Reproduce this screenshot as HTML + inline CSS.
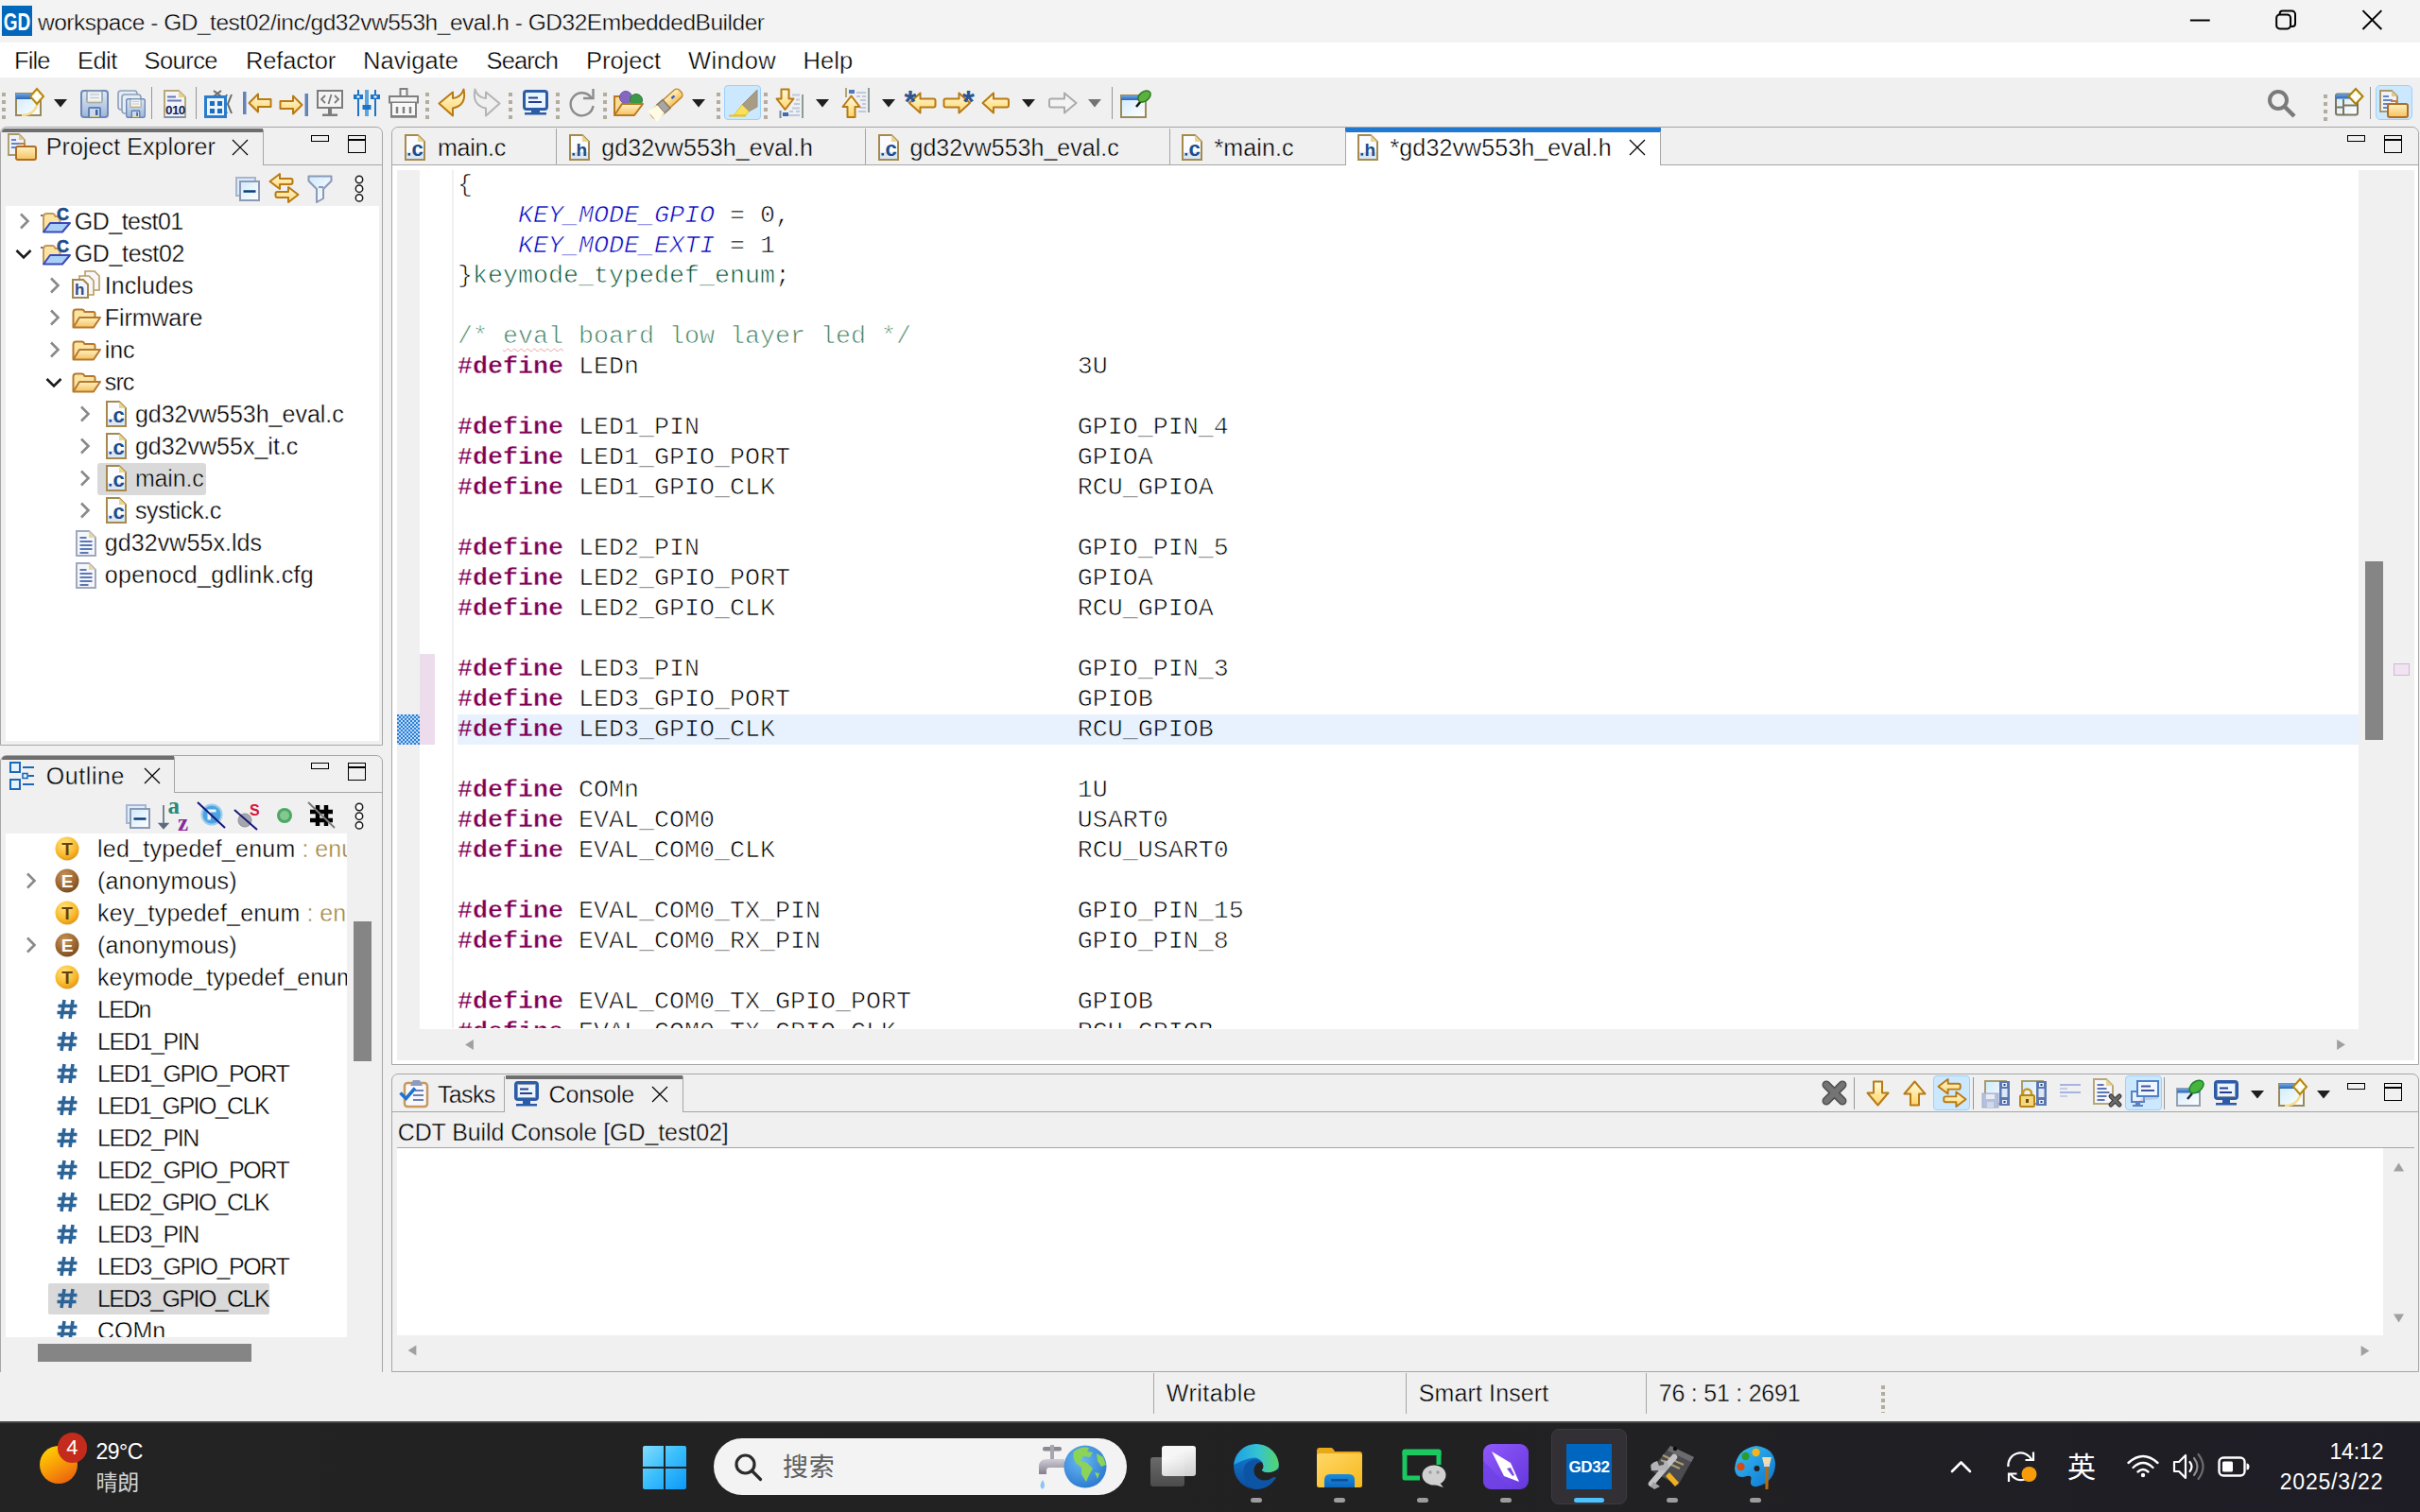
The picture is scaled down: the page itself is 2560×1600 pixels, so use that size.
<!DOCTYPE html>
<html lang="zh"><head><meta charset="utf-8"><title>workspace - GD_test02/inc/gd32vw553h_eval.h - GD32EmbeddedBuilder</title>
<style>
*{box-sizing:border-box;margin:0;padding:0}
html,body{width:2560px;height:1600px;overflow:hidden;background:#f0f0f0}
body{position:relative;font-family:"Liberation Sans","Noto Sans CJK SC",sans-serif;font-size:25px;color:#000;-webkit-font-smoothing:antialiased}
.a{position:absolute}
.t{position:absolute;white-space:pre;line-height:34px;height:34px}
.ln{position:absolute;left:484px;white-space:pre;font-family:"Liberation Mono",monospace;font-size:26.667px;line-height:32px;height:32px;color:#000;-webkit-text-stroke:.7px #fff}
.hl{-webkit-text-stroke-color:#e8f2fe}
.kw{color:#7f0055;font-weight:bold;-webkit-text-stroke-width:.4px}
.cm{color:#3f7f5f}
.en{color:#0000c0;font-style:italic}
.ty{color:#005032}
.sq{text-decoration:underline wavy #f0a0a0 1px;text-underline-offset:5px}
.bd{position:absolute;background:#a0a0a0}
svg{position:absolute;overflow:visible}
</style></head>
<body>
<div class="a" style="left:0px;top:0px;width:2560px;height:45px;background:#f3f3f3;"></div>
<div class="a" style="left:0px;top:45px;width:2560px;height:37px;background:#ffffff;"></div>
<div class="a" style="left:0px;top:82px;width:2560px;height:1422px;background:#f0f0f0;"></div>
<div class="a" style="left:2px;top:6px;width:32px;height:32px;background:#0067bb;"></div>
<div class="a" style="left:-4px;top:6px;width:44px;height:32px;color:#fff;font-weight:bold;font-size:25px;line-height:34px;text-align:center;letter-spacing:0;transform:scaleX(.76)">GD</div>
<div class="t" style="left:40px;top:6.8px;font-size:24.5px;color:#000;letter-spacing:-0.476px;-webkit-text-stroke:.4px #f3f3f3;">workspace - GD_test02/inc/gd32vw553h_eval.h - GD32EmbeddedBuilder</div>
<svg style="left:2301.500px;top:0" width="258" height="45" viewBox="0 0 260 45" fill="none" stroke="#000" stroke-width="2"><path d="M15 21.5h21"/><rect x="107" y="15.5" width="15" height="15" rx="3.5"/><path d="M110.5 15.5v-1a3 3 0 0 1 3-3h10a3.500 3.500 0 0 1 3.500 3.500v10a3 3 0 0 1-3 3h-1.500"/><path d="M199 11l20 20M219 11l-20 20"/></svg>
<div class="t" style="left:15px;top:46.5px;font-size:25.5px;color:#000;letter-spacing:-0.898px;-webkit-text-stroke:.4px #fff;">File</div>
<div class="t" style="left:82px;top:46.5px;font-size:25.5px;color:#000;letter-spacing:-0.551px;-webkit-text-stroke:.4px #fff;">Edit</div>
<div class="t" style="left:152.5px;top:46.5px;font-size:25.5px;color:#000;letter-spacing:-0.549px;-webkit-text-stroke:.4px #fff;">Source</div>
<div class="t" style="left:260px;top:46.5px;font-size:25.5px;color:#000;letter-spacing:-0.172px;-webkit-text-stroke:.4px #fff;">Refactor</div>
<div class="t" style="left:384px;top:46.5px;font-size:25.5px;color:#000;letter-spacing:0.043px;-webkit-text-stroke:.4px #fff;">Navigate</div>
<div class="t" style="left:514.5px;top:46.5px;font-size:25.5px;color:#000;letter-spacing:-0.883px;-webkit-text-stroke:.4px #fff;">Search</div>
<div class="t" style="left:620px;top:46.5px;font-size:25.5px;color:#000;letter-spacing:-0.054px;-webkit-text-stroke:.4px #fff;">Project</div>
<div class="t" style="left:728px;top:46.5px;font-size:25.5px;color:#000;letter-spacing:0.383px;-webkit-text-stroke:.4px #fff;">Window</div>
<div class="t" style="left:849.5px;top:46.5px;font-size:25.5px;color:#000;letter-spacing:0.112px;-webkit-text-stroke:.4px #fff;">Help</div>
<svg width="0" height="0" style="left:0;top:0"><defs>
<linearGradient id="gy" x1="0" y1="0" x2="0" y2="1"><stop offset="0" stop-color="#fffbe0"/><stop offset="1" stop-color="#ffd466"/></linearGradient>
<linearGradient id="gb" x1="0" y1="0" x2="0" y2="1"><stop offset="0" stop-color="#dfe9f6"/><stop offset="1" stop-color="#9fb6d8"/></linearGradient>
<linearGradient id="gw" x1="0" y1="0" x2="1" y2="1"><stop offset="0" stop-color="#cfeafb"/><stop offset="1" stop-color="#ffffff"/></linearGradient>
<linearGradient id="gf" x1="0" y1="0" x2="0" y2="1"><stop offset="0" stop-color="#fff2c4"/><stop offset="1" stop-color="#f5c160"/></linearGradient>
<linearGradient id="gt" x1="0" y1="0" x2="0" y2="1"><stop offset="0" stop-color="#6aa6e6"/><stop offset="1" stop-color="#2c64b4"/></linearGradient>
<radialGradient id="gT" cx=".4" cy=".3" r=".8"><stop offset="0" stop-color="#ffe680"/><stop offset=".6" stop-color="#f9b92c"/><stop offset="1" stop-color="#d98a10"/></radialGradient>
<radialGradient id="gE" cx=".4" cy=".3" r=".8"><stop offset="0" stop-color="#c9935a"/><stop offset=".6" stop-color="#9a6630"/><stop offset="1" stop-color="#6e4318"/></radialGradient>
</defs></svg>
<svg style="left:2px;top:98px" width="4" height="32" viewBox="0 0 4 32" ><rect x="0" y="0" width="4" height="4" fill="#b4ac9e"/><rect x="0" y="8" width="4" height="4" fill="#b4ac9e"/><rect x="0" y="16" width="4" height="4" fill="#b4ac9e"/><rect x="0" y="24" width="4" height="4" fill="#b4ac9e"/></svg>
<svg style="left:15px;top:93px" width="34" height="32" viewBox="0 0 34 32" ><rect x="2" y="6" width="26" height="23" fill="url(#gw)" stroke="#9a8a5a" stroke-width="2"/><rect x="2" y="6" width="20" height="6" fill="url(#gt)"/><path d="M8 29q14 0 17-14" stroke="#f7dc8c" stroke-width="2.500" fill="none"/><path d="M24 1l7 8-7 8-7-8z" fill="#fff6d8" stroke="#b8860b" stroke-width="2"/><path d="M24 4.500v9M19.500 9h9" stroke="#fff" stroke-width="2.500"/></svg>
<svg style="left:57px;top:105px" width="14" height="8.5" viewBox="0 0 14 8.5" ><path d="M0 0h14L7 8.500z" fill="#1f1f1f"/></svg>
<svg style="left:85px;top:95px" width="30" height="30" viewBox="0 0 30 30" ><g transform="scale(1)"><rect x="1" y="1" width="28" height="28" rx="3" fill="url(#gb)" stroke="#6c88b8" stroke-width="2"/><rect x="7" y="1.500" width="16" height="12" rx="1.500" fill="#f2f5f8" stroke="#8ea0a8" stroke-width="1.500"/><path d="M10 5h10M10 8.500h10" stroke="#c4ccd4" stroke-width="1.500"/><path d="M7.500 12.500h15" stroke="#f0d890" stroke-width="1.500"/><rect x="9" y="19" width="12" height="10" rx="1" fill="#cdd9ec" stroke="#5c80b8" stroke-width="2"/><rect x="16" y="21" width="2.500" height="6" fill="#3c64a8"/><path d="M10 28h10" stroke="#f0d890" stroke-width="1.500"/></g></svg>
<svg style="left:124px;top:95px" width="30" height="30" viewBox="0 0 30 30" ><rect x="1" y="1" width="20" height="20" rx="3" fill="#e4ecf6" stroke="#8ea0b8" stroke-width="1.600"/><rect x="5" y="5" width="20" height="20" rx="3" fill="#e4ecf6" stroke="#8ea0b8" stroke-width="1.600"/><g transform="translate(9,9)"><g transform="scale(0.7)"><rect x="1" y="1" width="28" height="28" rx="3" fill="url(#gb)" stroke="#6c88b8" stroke-width="2"/><rect x="7" y="1.500" width="16" height="12" rx="1.500" fill="#f2f5f8" stroke="#8ea0a8" stroke-width="1.500"/><path d="M10 5h10M10 8.500h10" stroke="#c4ccd4" stroke-width="1.500"/><path d="M7.500 12.500h15" stroke="#f0d890" stroke-width="1.500"/><rect x="9" y="19" width="12" height="10" rx="1" fill="#cdd9ec" stroke="#5c80b8" stroke-width="2"/><rect x="16" y="21" width="2.500" height="6" fill="#3c64a8"/><path d="M10 28h10" stroke="#f0d890" stroke-width="1.500"/></g></g></svg>
<div class="a" style="left:160px;top:92px;width:1.3px;height:34px;background:#969696;"></div>
<svg style="left:172px;top:94px" width="28" height="32" viewBox="0 0 28 32" ><path d="M2 2h15l7 7v21H2z" fill="#f2f4fc" stroke="#b8a878" stroke-width="2"/><path d="M17 2v7h7z" fill="#e8d08c"/><path d="M5 8.500h9M5 12.500h15" stroke="#6878b0" stroke-width="2"/><path d="M2 30h22" stroke="#8090b0" stroke-width="2"/><text x="3" y="27" font-family="Liberation Sans,sans-serif" font-weight="bold" font-size="13.500" fill="#10245c" letter-spacing="-.6">010</text></svg>
<div class="a" style="left:207px;top:92px;width:1.3px;height:34px;background:#969696;"></div>
<svg style="left:216px;top:94px" width="31" height="31" viewBox="0 0 31 31" ><path d="M10 2l8 6M18 2l-8 6M24 6l-4 10 4 10M29 6l-4 10 4 10" stroke="#6a6a6a" stroke-width="2" fill="none"/><rect x="1.500" y="8.500" width="21" height="21" fill="#eaf4fc" stroke="#2c7ccc" stroke-width="3"/><path d="M6 13h5v5H6zM14 13h5v5h-5zM6 21h5v5H6zM14 21h5v5h-5z" fill="#1c6cc0"/></svg>
<svg style="left:257px;top:97px" width="31" height="24" viewBox="0 0 31 24" ><rect x="0" y="0" width="3.500" height="24" fill="#6482b8"/><path d="M6.500 12L16 2.500v5.500h13.500v8H16v5.500z" fill="url(#gy)" stroke="#b87a14" stroke-width="2" stroke-linejoin="round"/></svg>
<svg style="left:295px;top:99px" width="31" height="24" viewBox="0 0 31 24" ><rect x="27.500" y="0" width="3.500" height="24" fill="#6482b8"/><path d="M24.500 12L15 2.500v5.500H1.500v8H15v5.500z" fill="url(#gy)" stroke="#b87a14" stroke-width="2" stroke-linejoin="round"/></svg>
<svg style="left:335px;top:95px" width="28" height="28" viewBox="0 0 28 28" ><rect x="1" y="1" width="26" height="18" fill="#f4f4f4" stroke="#7c7c7c" stroke-width="2"/><path d="M9 6l-4 4 4 4M19 6l4 4-4 4M15.500 5l-3 10" stroke="#7c7c7c" stroke-width="1.800" fill="none"/><rect x="12" y="20" width="4" height="6" fill="#7c7c7c"/><rect x="6" y="25.500" width="16" height="2.500" fill="#7c7c7c"/></svg>
<svg style="left:374px;top:95px" width="28" height="28" viewBox="0 0 28 28" ><path d="M5 0v28M23 0v28" stroke="#1c74c8" stroke-width="2"/><path d="M14 0v28" stroke="#5ca4dc" stroke-width="4"/><rect x="0" y="5" width="10" height="5" fill="#1c74c8"/><rect x="18" y="5" width="10" height="5" fill="#1c74c8"/><rect x="9.500" y="16" width="9" height="5" fill="#1c74c8"/><rect x="3.500" y="6.500" width="3" height="2" fill="#fff"/><rect x="21.500" y="6.500" width="3" height="2" fill="#fff"/></svg>
<svg style="left:411px;top:93px" width="32" height="32" viewBox="0 0 32 32" ><rect x="12.500" y="1" width="7" height="8" fill="#f4f4f4" stroke="#808080" stroke-width="2"/><rect x="1" y="9" width="30" height="6.500" fill="#f4f4f4" stroke="#808080" stroke-width="2"/><path d="M3 16v14h26V16" fill="#f8f8f8" stroke="#808080" stroke-width="2"/><path d="M9 20v7M16 20v7M23 20v7" stroke="#808080" stroke-width="2.500"/><path d="M2 30.500h28" stroke="#808080" stroke-width="2.500"/></svg>
<svg style="left:450px;top:98px" width="4" height="32" viewBox="0 0 4 32" ><rect x="0" y="0" width="4" height="4" fill="#b4ac9e"/><rect x="0" y="8" width="4" height="4" fill="#b4ac9e"/><rect x="0" y="16" width="4" height="4" fill="#b4ac9e"/><rect x="0" y="24" width="4" height="4" fill="#b4ac9e"/></svg>
<svg style="left:463px;top:93px" width="31" height="31" viewBox="0 0 31 31" ><path d="M1.500 16.500L16 4.500v6.500q9-1 11.500-9.500 3.500 17-11.500 20v8z" fill="url(#gy)" stroke="#b87a14" stroke-width="2" stroke-linejoin="round"/></svg>
<svg style="left:499px;top:93px" width="31" height="31" viewBox="0 0 31 31" ><path d="M29.500 16.500L15 4.500v6.500q-9-1-11.500-9.500-3.500 17 11.500 20v8z" fill="#f0f0f0" stroke="#b4b4b4" stroke-width="2" stroke-linejoin="round"/></svg>
<svg style="left:538px;top:98px" width="4" height="32" viewBox="0 0 4 32" ><rect x="0" y="0" width="4" height="4" fill="#b4ac9e"/><rect x="0" y="8" width="4" height="4" fill="#b4ac9e"/><rect x="0" y="16" width="4" height="4" fill="#b4ac9e"/><rect x="0" y="24" width="4" height="4" fill="#b4ac9e"/></svg>
<svg style="left:553px;top:95px" width="27" height="27" viewBox="0 0 27 27" ><rect x="1.500" y="1.500" width="24" height="19" rx="2.500" fill="#eaf6fe" stroke="#2c5ca8" stroke-width="3"/><path d="M6 8.500h10M6 13h14" stroke="#283c8c" stroke-width="2"/><rect x="9" y="21" width="9" height="3" fill="#2c5ca8"/><rect x="2" y="24" width="23" height="2.500" fill="#2c5ca8"/></svg>
<svg style="left:588px;top:98px" width="4" height="32" viewBox="0 0 4 32" ><rect x="0" y="0" width="4" height="4" fill="#b4ac9e"/><rect x="0" y="8" width="4" height="4" fill="#b4ac9e"/><rect x="0" y="16" width="4" height="4" fill="#b4ac9e"/><rect x="0" y="24" width="4" height="4" fill="#b4ac9e"/></svg>
<svg style="left:601px;top:94px" width="30" height="30" viewBox="0 0 30 30" ><path d="M24.500 9.500A12 12 0 1 0 26.500 18" fill="none" stroke="#8c8c8c" stroke-width="2.400"/><path d="M16 10h10.500V0" fill="none" stroke="#8c8c8c" stroke-width="2.400"/></svg>
<svg style="left:638px;top:98px" width="4" height="32" viewBox="0 0 4 32" ><rect x="0" y="0" width="4" height="4" fill="#b4ac9e"/><rect x="0" y="8" width="4" height="4" fill="#b4ac9e"/><rect x="0" y="16" width="4" height="4" fill="#b4ac9e"/><rect x="0" y="24" width="4" height="4" fill="#b4ac9e"/></svg>
<svg style="left:648px;top:94px" width="34" height="30" viewBox="0 0 34 30" ><path d="M2 28V8h9l3 3h14v6" fill="#f8dc94" stroke="#b87a1e" stroke-width="2"/><circle cx="14" cy="9" r="6.500" fill="#8468c0" stroke="#6a50a8" stroke-width="1"/><circle cx="25" cy="12" r="6.500" fill="#3c9848" stroke="#2a7c36" stroke-width="1"/><path d="M2 28l8-12h22l-9 12z" fill="url(#gf)" stroke="#b87a1e" stroke-width="2" stroke-linejoin="round"/></svg>
<svg style="left:688px;top:93px" width="34" height="33" viewBox="0 0 34 33" ><g transform="rotate(-42 17 17)"><rect x="-3" y="11.500" width="40" height="11" rx="4" fill="url(#gf)" stroke="#c08a30" stroke-width="1.500"/><rect x="9" y="11" width="8" height="12" fill="#a8a4a8" stroke="#8a7a50" stroke-width="1.500"/><path d="M9 11.500L-3 9.500v15l12-2z" fill="#fffbe4"/><rect x="25" y="15" width="4" height="2.500" fill="#3c5cc0"/></g></svg>
<svg style="left:732px;top:105px" width="14" height="8.5" viewBox="0 0 14 8.5" ><path d="M0 0h14L7 8.500z" fill="#1f1f1f"/></svg>
<svg style="left:758px;top:98px" width="4" height="32" viewBox="0 0 4 32" ><rect x="0" y="0" width="4" height="4" fill="#b4ac9e"/><rect x="0" y="8" width="4" height="4" fill="#b4ac9e"/><rect x="0" y="16" width="4" height="4" fill="#b4ac9e"/><rect x="0" y="24" width="4" height="4" fill="#b4ac9e"/></svg>
<div class="a" style="left:766px;top:90px;width:39px;height:37px;background:#cce8ff;border:1.500px solid #99d1ff;border-radius:4px"></div>
<svg style="left:770px;top:93px" width="32" height="32" viewBox="0 0 32 32" ><path d="M31 2v18l-9 5-7-7z" fill="#a89c84" stroke="#98907c" stroke-width="1"/><path d="M15 18l7 7-3 4H6q4-5 9-11z" fill="#f8e060" stroke="#e8c828" stroke-width="1"/><path d="M1 29.500h18" stroke="#e8c020" stroke-width="2"/></svg>
<svg style="left:808px;top:98px" width="4" height="32" viewBox="0 0 4 32" ><rect x="0" y="0" width="4" height="4" fill="#b4ac9e"/><rect x="0" y="8" width="4" height="4" fill="#b4ac9e"/><rect x="0" y="16" width="4" height="4" fill="#b4ac9e"/><rect x="0" y="24" width="4" height="4" fill="#b4ac9e"/></svg>
<svg style="left:821px;top:93px" width="30" height="32" viewBox="0 0 30 32" ><path d="M28 7v25" stroke="#8c9c98" stroke-width="2"/><path d="M17 7.500h8M21 12.500h4M19 17h6M17 21.500h8M14 25h4M21 25h4M12 29h13" stroke="#c0c8e0" stroke-width="2"/><path d="M4.500 24v8" stroke="#7088a8" stroke-width="2"/><rect x="7" y="26" width="6" height="4" fill="#3c6cb0"/><path d="M5.500 1.500h8v10h5l-9 11.500-9-11.500h5z" fill="url(#gy)" stroke="#b87a14" stroke-width="2" stroke-linejoin="round"/></svg>
<svg style="left:863px;top:105px" width="14" height="8.5" viewBox="0 0 14 8.5" ><path d="M0 0h14L7 8.500z" fill="#1f1f1f"/></svg>
<svg style="left:891px;top:93px" width="30" height="32" viewBox="0 0 30 32" ><path d="M4 0v10" stroke="#b0a878" stroke-width="2"/><path d="M28 0v26" stroke="#8c9c98" stroke-width="2"/><rect x="7" y="2" width="6" height="4" fill="#5478b8"/><path d="M15 5h10M15 9h4M21 9h4M19 13h6M21 17h4M19 21h6M17 25h8" stroke="#c0c8e0" stroke-width="2"/><path d="M5.500 31h8V20h5l-9-11.500-9 11.500h5z" fill="url(#gy)" stroke="#b87a14" stroke-width="2" stroke-linejoin="round"/></svg>
<svg style="left:933px;top:105px" width="14" height="8.5" viewBox="0 0 14 8.5" ><path d="M0 0h14L7 8.500z" fill="#1f1f1f"/></svg>
<svg style="left:958px;top:97px" width="33" height="24" viewBox="0 0 33 24" ><path d="M4 12L15.5 1.500v6h14q2 0 2 2v5q0 2-2 2h-14v6z" fill="url(#gy)" stroke="#b87a14" stroke-width="2" stroke-linejoin="round"/><text x="-1.500" y="22" font-family="Liberation Sans,sans-serif" font-weight="bold" font-size="33" fill="#2c5490">*</text></svg>
<svg style="left:997px;top:97px" width="33" height="24" viewBox="0 0 33 24" ><g transform="translate(33,0) scale(-1,1)"><path d="M4 12L15.5 1.500v6h14q2 0 2 2v5q0 2-2 2h-14v6z" fill="url(#gy)" stroke="#b87a14" stroke-width="2" stroke-linejoin="round"/></g><text x="21" y="22" font-family="Liberation Sans,sans-serif" font-weight="bold" font-size="33" fill="#2c5490">*</text></svg>
<svg style="left:1038px;top:97px" width="31" height="24" viewBox="0 0 31 24" ><path d="M1.5 12L13 1.500v6h14q2 0 2 2v5q0 2-2 2h-14v6z" fill="url(#gy)" stroke="#b87a14" stroke-width="2" stroke-linejoin="round"/></svg>
<svg style="left:1081px;top:105px" width="14" height="8.5" viewBox="0 0 14 8.5" ><path d="M0 0h14L7 8.500z" fill="#1f1f1f"/></svg>
<svg style="left:1109px;top:97px" width="31" height="24" viewBox="0 0 31 24" ><path d="M29.500 12L17 1.500v6H3q-2 0-2 2v5q0 2 2 2h14v6z" fill="#f4f4f4" stroke="#ababab" stroke-width="2" stroke-linejoin="round"/></svg>
<svg style="left:1151px;top:105px" width="14" height="8.5" viewBox="0 0 14 8.5" ><path d="M0 0h14L7 8.500z" fill="#737373"/></svg>
<div class="a" style="left:1176px;top:92px;width:1.3px;height:34px;background:#969696;"></div>
<svg style="left:1185px;top:95px" width="34" height="31" viewBox="0 0 34 31" ><rect x="1" y="6" width="26" height="23" fill="url(#gw)" stroke="#9a8a5a" stroke-width="2"/><rect x="1" y="6" width="26" height="5" fill="url(#gt)"/><path d="M22 12l-5 6" stroke="#111" stroke-width="2.500"/><ellipse cx="24" cy="9.500" rx="4.500" ry="3.500" transform="rotate(-38 24 9.500)" fill="#2c9434"/><ellipse cx="25.500" cy="7" rx="7.500" ry="5" transform="rotate(-38 25.500 7)" fill="#5cb040" stroke="#2a7a22" stroke-width="1.500"/></svg>
<svg style="left:2397px;top:93px" width="33" height="33" viewBox="0 0 33 33" ><circle cx="13" cy="13" r="9" fill="none" stroke="#7a7a7a" stroke-width="4"/><path d="M20 20l10 10" stroke="#7a7a7a" stroke-width="4.500"/></svg>
<svg style="left:2458px;top:100px" width="4" height="32" viewBox="0 0 4 32" ><rect x="0" y="0" width="4" height="4" fill="#b4ac9e"/><rect x="0" y="8" width="4" height="4" fill="#b4ac9e"/><rect x="0" y="16" width="4" height="4" fill="#b4ac9e"/><rect x="0" y="24" width="4" height="4" fill="#b4ac9e"/></svg>
<svg style="left:2470px;top:93px" width="32" height="32" viewBox="0 0 32 32" ><rect x="1" y="6.500" width="23" height="22" rx="2" fill="url(#gw)" stroke="#7c745c" stroke-width="2"/><path d="M1 8.500q0-2 2-2h19v5H1z" fill="url(#gt)"/><path d="M9 12v17M1 20.500h8M9 18.500h15" stroke="#7c745c" stroke-width="2"/><path d="M22 1l7.500 8-7.500 8-7.500-8z" fill="#fff6d8" stroke="#a8800b" stroke-width="2"/><path d="M22 4.500v9M17.500 9h9" stroke="#fff" stroke-width="2.500"/></svg>
<div class="a" style="left:2507px;top:92px;width:1.3px;height:34px;background:#969696;"></div>
<div class="a" style="left:2513px;top:90px;width:39px;height:37px;background:#cce8ff;border:1.500px solid #99d1ff;border-radius:5px"></div>
<svg style="left:2516px;top:94px" width="32" height="32" viewBox="0 0 32 32" ><path d="M2 2h12l6 6v16H2z" fill="#f0f2fa" stroke="#a89868" stroke-width="2"/><path d="M14 2v6h6z" fill="#e0c888"/><path d="M5 8h6M5 12h10M5 16h10M5 20h6" stroke="#6484c4" stroke-width="2"/><path d="M13 13h6v3" fill="#fff" stroke="#c08040" stroke-width="2"/><rect x="10" y="16" width="21" height="14" rx="2" fill="url(#gf)" stroke="#b06c20" stroke-width="2"/></svg>
<div class="a" style="left:0px;top:134px;width:405px;height:655px;border:1px solid #a6a6a6;border-radius:7px 7px 0 0;background:#f0f0f0"></div>
<div class="a" style="left:2px;top:136px;width:276px;height:4px;background:#6e6e6e;border-radius:4px 0 0 0"></div>
<div class="a" style="left:278px;top:137px;width:1px;height:37px;background:#a6a6a6;"></div>
<div class="a" style="left:278px;top:173.5px;width:126px;height:1px;background:#a6a6a6;"></div>
<div class="t" style="left:48.75px;top:138px;font-size:25px;color:#000;letter-spacing:0.087px;-webkit-text-stroke:.4px #f0f0f0;">Project Explorer</div>
<svg style="left:245px;top:147px" width="18" height="18" viewBox="0 0 18 18" stroke="#000" stroke-width="1.2" fill="none"><path d="M1 1L17 17M17 1L1 17"/></svg>
<div class="a" style="left:329px;top:143px;width:19px;height:7px;border:1.500px solid #000"></div><div class="a" style="left:368px;top:143px;width:19px;height:19px;border:1.500px solid #000;border-top-width:1.500px"></div><div class="a" style="left:368px;top:147px;width:19px;height:1.500px;background:#000"></div>
<div class="a" style="left:6px;top:217.5px;width:394.5px;height:566.5px;background:#ffffff;"></div>
<div class="a" style="left:103px;top:490px;width:115px;height:33.5px;background:#d9d9d9;border-radius:3px"></div>
<svg style="left:20px;top:225px" width="12" height="18" viewBox="0 0 12 18" fill="none" stroke="#8a8a8a" stroke-width="2.6"><path d="M2 1.500L9.500 9L2 16.500"/></svg>
<div class="t" style="left:78.75px;top:217px;font-size:25px;color:#000;letter-spacing:-0.502px;-webkit-text-stroke:.4px #f0f0f0;">GD_test01</div>
<svg style="left:16px;top:263px" width="18" height="12" viewBox="0 0 18 12" fill="none" stroke="#1a1a1a" stroke-width="2.6"><path d="M1.500 2L9 9.500L16.500 2"/></svg>
<div class="t" style="left:78.75px;top:251px;font-size:25px;color:#000;letter-spacing:-0.363px;-webkit-text-stroke:.4px #f0f0f0;">GD_test02</div>
<svg style="left:52px;top:293px" width="12" height="18" viewBox="0 0 12 18" fill="none" stroke="#8a8a8a" stroke-width="2.6"><path d="M2 1.500L9.500 9L2 16.500"/></svg>
<div class="t" style="left:110.75px;top:285px;font-size:25px;color:#000;letter-spacing:0.078px;-webkit-text-stroke:.4px #f0f0f0;">Includes</div>
<svg style="left:52px;top:327px" width="12" height="18" viewBox="0 0 12 18" fill="none" stroke="#8a8a8a" stroke-width="2.6"><path d="M2 1.500L9.500 9L2 16.500"/></svg>
<div class="t" style="left:110.75px;top:319px;font-size:25px;color:#000;letter-spacing:-0.084px;-webkit-text-stroke:.4px #f0f0f0;">Firmware</div>
<svg style="left:52px;top:361px" width="12" height="18" viewBox="0 0 12 18" fill="none" stroke="#8a8a8a" stroke-width="2.6"><path d="M2 1.500L9.500 9L2 16.500"/></svg>
<div class="t" style="left:110.75px;top:353px;font-size:25px;color:#000;letter-spacing:-0.073px;-webkit-text-stroke:.4px #f0f0f0;">inc</div>
<svg style="left:48px;top:399px" width="18" height="12" viewBox="0 0 18 12" fill="none" stroke="#1a1a1a" stroke-width="2.6"><path d="M1.500 2L9 9.500L16.500 2"/></svg>
<div class="t" style="left:110.75px;top:387px;font-size:25px;color:#000;letter-spacing:-0.859px;-webkit-text-stroke:.4px #f0f0f0;">src</div>
<svg style="left:84px;top:429px" width="12" height="18" viewBox="0 0 12 18" fill="none" stroke="#8a8a8a" stroke-width="2.6"><path d="M2 1.500L9.500 9L2 16.500"/></svg>
<div class="t" style="left:142.9px;top:421px;font-size:25px;color:#000;letter-spacing:-0.006px;-webkit-text-stroke:.4px #f0f0f0;">gd32vw553h_eval.c</div>
<svg style="left:84px;top:463px" width="12" height="18" viewBox="0 0 12 18" fill="none" stroke="#8a8a8a" stroke-width="2.6"><path d="M2 1.500L9.500 9L2 16.500"/></svg>
<div class="t" style="left:142.9px;top:455px;font-size:25px;color:#000;letter-spacing:0.005px;-webkit-text-stroke:.4px #f0f0f0;">gd32vw55x_it.c</div>
<svg style="left:84px;top:497px" width="12" height="18" viewBox="0 0 12 18" fill="none" stroke="#8a8a8a" stroke-width="2.6"><path d="M2 1.500L9.500 9L2 16.500"/></svg>
<div class="t" style="left:142.9px;top:489px;font-size:25px;color:#000;letter-spacing:-0.157px;-webkit-text-stroke:.4px #f0f0f0;">main.c</div>
<svg style="left:84px;top:531px" width="12" height="18" viewBox="0 0 12 18" fill="none" stroke="#8a8a8a" stroke-width="2.6"><path d="M2 1.500L9.500 9L2 16.500"/></svg>
<div class="t" style="left:142.9px;top:523px;font-size:25px;color:#000;letter-spacing:-0.373px;-webkit-text-stroke:.4px #f0f0f0;">systick.c</div>
<div class="t" style="left:110.75px;top:557px;font-size:25px;color:#000;letter-spacing:0.081px;-webkit-text-stroke:.4px #f0f0f0;">gd32vw55x.lds</div>
<div class="t" style="left:110.75px;top:591px;font-size:25px;color:#000;letter-spacing:0.322px;-webkit-text-stroke:.4px #f0f0f0;">openocd_gdlink.cfg</div>
<svg style="left:249px;top:187px" width="27" height="26" viewBox="0 0 27 26" ><rect x="1" y="1" width="20" height="19" fill="#d8ecfa" stroke="#a8b4d0" stroke-width="2"/><rect x="5" y="5" width="20" height="20" fill="url(#gw)" stroke="#8c98b4" stroke-width="2"/><path d="M8.500 15.500h13" stroke="#0c3c78" stroke-width="2.500"/></svg>
<svg style="left:284px;top:183px" width="33" height="33" viewBox="0 0 33 33" ><g transform="scale(1)"><path d="M1.500 9L12 1v5h11.500q2 0 2 2v2q0 2-2 2H12v5z" fill="url(#gy)" stroke="#b87a14" stroke-width="2" stroke-linejoin="round"/><path d="M31.500 23L21 15v5H9.500q-2 0-2 2v2q0 2 2 2H21v5z" fill="url(#gy)" stroke="#b87a14" stroke-width="2" stroke-linejoin="round"/></g></svg>
<svg style="left:325px;top:185px" width="27" height="30" viewBox="0 0 27 30" ><path d="M1.500 1.500h24v5L17 15v10l-7 4V15L1.500 6.500z" fill="url(#gw)" stroke="#8c98b8" stroke-width="2" stroke-linejoin="round"/><path d="M12 13h5" stroke="#8c98b8" stroke-width="2"/></svg>
<svg style="left:374.5px;top:185px" width="10" height="30" viewBox="0 0 10 30" ><circle cx="5" cy="5" r="3.700" fill="#fff" stroke="#1a1a1a" stroke-width="1.500"/><circle cx="5" cy="14.700" r="3.700" fill="#fff" stroke="#1a1a1a" stroke-width="1.500"/><circle cx="5" cy="24.400" r="3.700" fill="#fff" stroke="#1a1a1a" stroke-width="1.500"/></svg>
<svg style="left:42px;top:220px" width="33" height="27" viewBox="0 0 33 27" ><path d="M1 8h4" stroke="#7c6c8c" stroke-width="2"/><path d="M4 25V9.500q0-3.500 3.500-3.500h6q2 0 3 3h5v7" fill="#fae4a4" stroke="#c49a58" stroke-width="2"/><path d="M4 25.500L11 16h21l-8 9.500z" fill="#a8d0f8" stroke="#3c48b8" stroke-width="2" stroke-linejoin="round"/><text x="18" y="13" font-family="Liberation Sans,sans-serif" font-weight="bold" font-size="18" fill="#1c4c88" stroke="#1c4c88" stroke-width=".6">C</text></svg>
<svg style="left:42px;top:254px" width="33" height="27" viewBox="0 0 33 27" ><path d="M1 8h4" stroke="#7c6c8c" stroke-width="2"/><path d="M4 25V9.500q0-3.500 3.500-3.500h6q2 0 3 3h5v7" fill="#fae4a4" stroke="#c49a58" stroke-width="2"/><path d="M4 25.500L11 16h21l-8 9.500z" fill="#a8d0f8" stroke="#3c48b8" stroke-width="2" stroke-linejoin="round"/><text x="18" y="13" font-family="Liberation Sans,sans-serif" font-weight="bold" font-size="18" fill="#1c4c88" stroke="#1c4c88" stroke-width=".6">C</text></svg>
<svg style="left:76px;top:286px" width="31" height="30" viewBox="0 0 31 30" ><path d="M14 1h10l5 5v15h-15z" fill="#f6f6fc" stroke="#b89c5c" stroke-width="1.600"/><path d="M8 6h10l5 5v15h-15z" fill="#f6f6fc" stroke="#b89c5c" stroke-width="1.600"/><path d="M1 10h11l5 5v14H1z" fill="#f4f6fe" stroke="#a68a4c" stroke-width="2"/><text x="3" y="26" font-family="Liberation Sans,sans-serif" font-weight="bold" font-size="17" fill="#2c4c88">h</text></svg>
<svg style="left:75.5px;top:326px" width="31" height="22" viewBox="0 0 31 22" ><path d="M1.500 20V4.500q0-3 3-3h6q2 0 3 2.500h9q2 0 2 2v4" fill="#fae4a4" stroke="#b8782a" stroke-width="2"/><path d="M1.500 20.500L8 10h22l-7 10.500z" fill="url(#gf)" stroke="#b8782a" stroke-width="2" stroke-linejoin="round"/></svg>
<svg style="left:75.5px;top:360px" width="31" height="22" viewBox="0 0 31 22" ><path d="M1.500 20V4.500q0-3 3-3h6q2 0 3 2.500h9q2 0 2 2v4" fill="#fae4a4" stroke="#b8782a" stroke-width="2"/><path d="M1.500 20.500L8 10h22l-7 10.500z" fill="url(#gf)" stroke="#b8782a" stroke-width="2" stroke-linejoin="round"/></svg>
<svg style="left:75.5px;top:394px" width="31" height="22" viewBox="0 0 31 22" ><path d="M1.500 20V4.500q0-3 3-3h6q2 0 3 2.500h9q2 0 2 2v4" fill="#fae4a4" stroke="#b8782a" stroke-width="2"/><path d="M1.500 20.500L8 10h22l-7 10.500z" fill="url(#gf)" stroke="#b8782a" stroke-width="2" stroke-linejoin="round"/></svg>
<svg style="left:112px;top:424px" width="23" height="28" viewBox="0 0 23 28" ><path d="M1 1h13l7 7v19H1z" fill="#fbfcff" stroke="#a68a4c" stroke-width="2"/><path d="M14 1v7h7z" fill="#ecd490"/><rect x="2" y="19" width="18" height="7" fill="#dbe6f6"/><rect x="3.500" y="20" width="2.600" height="2.600" fill="#1c4c88"/><text x="7.5" y="22.800" font-family="Liberation Sans,sans-serif" font-weight="bold" font-size="22" fill="#1c4c88">c</text></svg>
<svg style="left:112px;top:458px" width="23" height="28" viewBox="0 0 23 28" ><path d="M1 1h13l7 7v19H1z" fill="#fbfcff" stroke="#a68a4c" stroke-width="2"/><path d="M14 1v7h7z" fill="#ecd490"/><rect x="2" y="19" width="18" height="7" fill="#dbe6f6"/><rect x="3.500" y="20" width="2.600" height="2.600" fill="#1c4c88"/><text x="7.5" y="22.800" font-family="Liberation Sans,sans-serif" font-weight="bold" font-size="22" fill="#1c4c88">c</text></svg>
<svg style="left:112px;top:492px" width="23" height="28" viewBox="0 0 23 28" ><path d="M1 1h13l7 7v19H1z" fill="#fbfcff" stroke="#a68a4c" stroke-width="2"/><path d="M14 1v7h7z" fill="#ecd490"/><rect x="2" y="19" width="18" height="7" fill="#dbe6f6"/><rect x="3.500" y="20" width="2.600" height="2.600" fill="#1c4c88"/><text x="7.5" y="22.800" font-family="Liberation Sans,sans-serif" font-weight="bold" font-size="22" fill="#1c4c88">c</text></svg>
<svg style="left:112px;top:526px" width="23" height="28" viewBox="0 0 23 28" ><path d="M1 1h13l7 7v19H1z" fill="#fbfcff" stroke="#a68a4c" stroke-width="2"/><path d="M14 1v7h7z" fill="#ecd490"/><rect x="2" y="19" width="18" height="7" fill="#dbe6f6"/><rect x="3.500" y="20" width="2.600" height="2.600" fill="#1c4c88"/><text x="7.5" y="22.800" font-family="Liberation Sans,sans-serif" font-weight="bold" font-size="22" fill="#1c4c88">c</text></svg>
<svg style="left:80px;top:561px" width="23" height="28" viewBox="0 0 23 28" ><path d="M1 1h13l7 7v19H1z" fill="#f4f6fc" stroke="#a0a8bc" stroke-width="2"/><path d="M14 1v7h7z" fill="#e8d8a0"/><path d="M4.500 8h7M4.500 12h13M4.500 16h13M4.500 20h13M4.500 24h9" stroke="#5c78b4" stroke-width="2"/></svg>
<svg style="left:80px;top:595px" width="23" height="28" viewBox="0 0 23 28" ><path d="M1 1h13l7 7v19H1z" fill="#f4f6fc" stroke="#a0a8bc" stroke-width="2"/><path d="M14 1v7h7z" fill="#e8d8a0"/><path d="M4.500 8h7M4.500 12h13M4.500 16h13M4.500 20h13M4.500 24h9" stroke="#5c78b4" stroke-width="2"/></svg>
<div class="a" style="left:0px;top:798.5px;width:405px;height:700px;border:1px solid #a6a6a6;border-radius:7px 7px 0 0;background:#f0f0f0"></div>
<div class="a" style="left:0px;top:1452px;width:420px;height:52px;background:#f0f0f0;"></div>
<div class="a" style="left:2px;top:800px;width:182px;height:4px;background:#6e6e6e;border-radius:4px 0 0 0"></div>
<div class="a" style="left:184px;top:801px;width:1px;height:37px;background:#a6a6a6;"></div>
<div class="a" style="left:184px;top:838px;width:220px;height:1px;background:#a6a6a6;"></div>
<div class="t" style="left:48.75px;top:803.5px;font-size:25px;color:#000;letter-spacing:0.576px;-webkit-text-stroke:.4px #f0f0f0;">Outline</div>
<svg style="left:152px;top:812px" width="18" height="18" viewBox="0 0 18 18" stroke="#000" stroke-width="1.2" fill="none"><path d="M1 1L17 17M17 1L1 17"/></svg>
<div class="a" style="left:329px;top:807px;width:19px;height:7px;border:1.500px solid #000"></div><div class="a" style="left:368px;top:807px;width:19px;height:19px;border:1.500px solid #000;border-top-width:1.500px"></div><div class="a" style="left:368px;top:811px;width:19px;height:1.500px;background:#000"></div>
<div class="a" style="left:6px;top:882px;width:361px;height:532.5px;background:#ffffff;"></div>
<div class="a" style="left:374px;top:975px;width:19px;height:147.5px;background:#858585;"></div>
<div class="a" style="left:40px;top:1422px;width:226px;height:19px;background:#858585;"></div>
<div class="a" style="left:51px;top:1358px;width:234px;height:33px;background:#d9d9d9;border-radius:2px"></div>
<div class="a" style="left:0;top:0;width:367px;height:1414.5px;overflow:hidden">
<div class="t" style="left:103px;top:880.7px;font-size:25px;color:#000;letter-spacing:0.236px;-webkit-text-stroke:.4px #fff;">led_typedef_enum</div>
<div class="t" style="left:312.5px;top:880.7px;font-size:25px;color:#a0823c;-webkit-text-stroke:.4px #fff;"> : enu</div>
<svg style="left:26.5px;top:923.2px" width="12" height="18" viewBox="0 0 12 18" fill="none" stroke="#8a8a8a" stroke-width="2.6"><path d="M2 1.500L9.500 9L2 16.500"/></svg>
<div class="t" style="left:103px;top:914.7px;font-size:25px;color:#000;letter-spacing:0.168px;-webkit-text-stroke:.4px #fff;">(anonymous)</div>
<div class="t" style="left:103px;top:948.7px;font-size:25px;color:#000;letter-spacing:0.202px;-webkit-text-stroke:.4px #fff;">key_typedef_enum</div>
<div class="t" style="left:317.5px;top:948.7px;font-size:25px;color:#a0823c;-webkit-text-stroke:.4px #fff;"> : en</div>
<svg style="left:26.5px;top:991.2px" width="12" height="18" viewBox="0 0 12 18" fill="none" stroke="#8a8a8a" stroke-width="2.6"><path d="M2 1.500L9.500 9L2 16.500"/></svg>
<div class="t" style="left:103px;top:982.7px;font-size:25px;color:#000;letter-spacing:0.168px;-webkit-text-stroke:.4px #fff;">(anonymous)</div>
<div class="t" style="left:103px;top:1016.7px;font-size:25px;color:#000;-webkit-text-stroke:.4px #fff;">keymode_typedef_enum</div>
<div class="t" style="left:103px;top:1050.7px;font-size:25px;color:#000;letter-spacing:-1.699px;-webkit-text-stroke:.4px #fff;">LEDn</div>
<div class="t" style="left:103px;top:1084.7px;font-size:25px;color:#000;letter-spacing:-1.391px;-webkit-text-stroke:.4px #fff;">LED1_PIN</div>
<div class="t" style="left:103px;top:1118.7px;font-size:25px;color:#000;letter-spacing:-1.390px;-webkit-text-stroke:.4px #fff;">LED1_GPIO_PORT</div>
<div class="t" style="left:103px;top:1152.7px;font-size:25px;color:#000;letter-spacing:-1.577px;-webkit-text-stroke:.4px #fff;">LED1_GPIO_CLK</div>
<div class="t" style="left:103px;top:1186.7px;font-size:25px;color:#000;letter-spacing:-1.391px;-webkit-text-stroke:.4px #fff;">LED2_PIN</div>
<div class="t" style="left:103px;top:1220.7px;font-size:25px;color:#000;letter-spacing:-1.390px;-webkit-text-stroke:.4px #fff;">LED2_GPIO_PORT</div>
<div class="t" style="left:103px;top:1254.7px;font-size:25px;color:#000;letter-spacing:-1.577px;-webkit-text-stroke:.4px #fff;">LED2_GPIO_CLK</div>
<div class="t" style="left:103px;top:1288.7px;font-size:25px;color:#000;letter-spacing:-1.391px;-webkit-text-stroke:.4px #fff;">LED3_PIN</div>
<div class="t" style="left:103px;top:1322.7px;font-size:25px;color:#000;letter-spacing:-1.390px;-webkit-text-stroke:.4px #fff;">LED3_GPIO_PORT</div>
<div class="t" style="left:103px;top:1356.7px;font-size:25px;color:#000;letter-spacing:-1.577px;-webkit-text-stroke:.4px #d9d9d9;">LED3_GPIO_CLK</div>
<div class="t" style="left:103px;top:1390.7px;font-size:25px;color:#000;-webkit-text-stroke:.4px #fff;">COMn</div>
<svg style="left:58px;top:884.5px" width="26" height="26" viewBox="0 0 26 26" ><circle cx="13" cy="13" r="12.500" fill="url(#gT)"/><text x="13" y="20" text-anchor="middle" font-family="Liberation Sans,sans-serif" font-weight="bold" font-size="19" fill="#6c3c0c">T</text></svg>
<svg style="left:58px;top:918.5px" width="26" height="26" viewBox="0 0 26 26" ><circle cx="13" cy="13" r="12.500" fill="url(#gE)"/><text x="13" y="20" text-anchor="middle" font-family="Liberation Sans,sans-serif" font-weight="bold" font-size="19" fill="#ffffff">E</text></svg>
<svg style="left:58px;top:952.5px" width="26" height="26" viewBox="0 0 26 26" ><circle cx="13" cy="13" r="12.500" fill="url(#gT)"/><text x="13" y="20" text-anchor="middle" font-family="Liberation Sans,sans-serif" font-weight="bold" font-size="19" fill="#6c3c0c">T</text></svg>
<svg style="left:58px;top:986.5px" width="26" height="26" viewBox="0 0 26 26" ><circle cx="13" cy="13" r="12.500" fill="url(#gE)"/><text x="13" y="20" text-anchor="middle" font-family="Liberation Sans,sans-serif" font-weight="bold" font-size="19" fill="#ffffff">E</text></svg>
<svg style="left:58px;top:1020.5px" width="26" height="26" viewBox="0 0 26 26" ><circle cx="13" cy="13" r="12.500" fill="url(#gT)"/><text x="13" y="20" text-anchor="middle" font-family="Liberation Sans,sans-serif" font-weight="bold" font-size="19" fill="#6c3c0c">T</text></svg>
<svg style="left:60px;top:1056.7px" width="22" height="22" viewBox="0 0 22 22" ><path d="M8 1L5 21M17 1l-3 20M1.500 7.500h20M0.500 14.500h20" stroke="#2c6498" stroke-width="3.600" fill="none"/></svg>
<svg style="left:60px;top:1090.7px" width="22" height="22" viewBox="0 0 22 22" ><path d="M8 1L5 21M17 1l-3 20M1.500 7.500h20M0.500 14.500h20" stroke="#2c6498" stroke-width="3.600" fill="none"/></svg>
<svg style="left:60px;top:1124.7px" width="22" height="22" viewBox="0 0 22 22" ><path d="M8 1L5 21M17 1l-3 20M1.500 7.500h20M0.500 14.500h20" stroke="#2c6498" stroke-width="3.600" fill="none"/></svg>
<svg style="left:60px;top:1158.7px" width="22" height="22" viewBox="0 0 22 22" ><path d="M8 1L5 21M17 1l-3 20M1.500 7.500h20M0.500 14.500h20" stroke="#2c6498" stroke-width="3.600" fill="none"/></svg>
<svg style="left:60px;top:1192.7px" width="22" height="22" viewBox="0 0 22 22" ><path d="M8 1L5 21M17 1l-3 20M1.500 7.500h20M0.500 14.500h20" stroke="#2c6498" stroke-width="3.600" fill="none"/></svg>
<svg style="left:60px;top:1226.7px" width="22" height="22" viewBox="0 0 22 22" ><path d="M8 1L5 21M17 1l-3 20M1.500 7.500h20M0.500 14.500h20" stroke="#2c6498" stroke-width="3.600" fill="none"/></svg>
<svg style="left:60px;top:1260.7px" width="22" height="22" viewBox="0 0 22 22" ><path d="M8 1L5 21M17 1l-3 20M1.500 7.500h20M0.500 14.500h20" stroke="#2c6498" stroke-width="3.600" fill="none"/></svg>
<svg style="left:60px;top:1294.7px" width="22" height="22" viewBox="0 0 22 22" ><path d="M8 1L5 21M17 1l-3 20M1.500 7.500h20M0.500 14.500h20" stroke="#2c6498" stroke-width="3.600" fill="none"/></svg>
<svg style="left:60px;top:1328.7px" width="22" height="22" viewBox="0 0 22 22" ><path d="M8 1L5 21M17 1l-3 20M1.500 7.500h20M0.500 14.500h20" stroke="#2c6498" stroke-width="3.600" fill="none"/></svg>
<svg style="left:60px;top:1362.7px" width="22" height="22" viewBox="0 0 22 22" ><path d="M8 1L5 21M17 1l-3 20M1.500 7.500h20M0.500 14.500h20" stroke="#2c6498" stroke-width="3.600" fill="none"/></svg>
<svg style="left:60px;top:1396.7px" width="22" height="22" viewBox="0 0 22 22" ><path d="M8 1L5 21M17 1l-3 20M1.500 7.500h20M0.500 14.500h20" stroke="#2c6498" stroke-width="3.600" fill="none"/></svg>
</div>
<svg style="left:8px;top:141px" width="32" height="30" viewBox="0 0 32 30" ><path d="M1 1h11l6 6v16H1z" fill="#f0f2fa" stroke="#a89868" stroke-width="1.800"/><path d="M12 1v6h6z" fill="#e0c888"/><path d="M4 7h5M4 11h9M4 15h5" stroke="#6484c4" stroke-width="2"/><path d="M12 11h6v3" fill="#fff" stroke="#c08040" stroke-width="2"/><rect x="9" y="14" width="21" height="14" rx="2" fill="url(#gf)" stroke="#b06c20" stroke-width="2"/></svg>
<svg style="left:9px;top:805px" width="30" height="32" viewBox="0 0 30 32" ><rect x="2" y="2" width="10" height="10" fill="#e4f2fc" stroke="#1c68b8" stroke-width="2"/><rect x="2" y="20" width="10" height="10" fill="#e4f2fc" stroke="#1c68b8" stroke-width="2"/><path d="M15 7h12M15 25h12M21 16h6" stroke="#1c68b8" stroke-width="2"/><rect x="15" y="13.500" width="5" height="5" fill="#e4f2fc" stroke="#1c68b8" stroke-width="1.600"/></svg>
<svg style="left:133px;top:851px" width="27" height="26" viewBox="0 0 27 26" ><rect x="1" y="1" width="20" height="19" fill="#d8ecfa" stroke="#a8b4d0" stroke-width="2"/><rect x="5" y="5" width="20" height="20" fill="url(#gw)" stroke="#8c98b4" stroke-width="2"/><path d="M8.500 15.500h13" stroke="#0c3c78" stroke-width="2.500"/></svg>
<svg style="left:167px;top:848px" width="35" height="32" viewBox="0 0 35 32" ><path d="M6 4v24M1.500 23.500L6 28.500l4.500-5z" stroke="#5c6c7c" stroke-width="1.600" fill="#5c6c7c"/><text x="10.500" y="13" font-family="Liberation Serif,serif" font-weight="bold" font-size="25" fill="#2a8878">a</text><text x="21" y="30.500" font-family="Liberation Serif,serif" font-weight="bold" font-size="25" fill="#8a2a98">z</text></svg>
<svg style="left:208px;top:848px" width="32" height="32" viewBox="0 0 32 32" ><circle cx="16" cy="14" r="10.500" fill="#4ca4e0" stroke="#9cccf0" stroke-width="2"/><path d="M11.500 8.500h9v3h-5.500v8h-3.500z" fill="#eaf6ff"/><path d="M1 1l29 27" stroke="#14147c" stroke-width="2"/></svg>
<svg style="left:247px;top:848px" width="30" height="32" viewBox="0 0 30 32" ><circle cx="12" cy="20" r="7" fill="#a4a8ac" stroke="#8c9094" stroke-width="1"/><text x="17" y="14.500" font-family="Liberation Sans,sans-serif" font-weight="bold" font-size="16" fill="#d4143c">S</text><path d="M1 9l24 21" stroke="#14147c" stroke-width="2"/></svg>
<svg style="left:292px;top:854px" width="18" height="18" viewBox="0 0 18 18" ><circle cx="9" cy="9" r="8" fill="#4ca864"/><circle cx="9" cy="9" r="5" fill="#84c890"/></svg>
<svg style="left:326px;top:849px" width="28" height="28" viewBox="0 0 28 28" ><path d="M10 3v22M19 3v22M2 10h24M2 19h24" stroke="#000" stroke-width="4.500"/><path d="M0 0l28 27" stroke="#7c7c7c" stroke-width="2"/></svg>
<svg style="left:374.5px;top:849px" width="10" height="30" viewBox="0 0 10 30" ><circle cx="5" cy="5" r="3.700" fill="#fff" stroke="#1a1a1a" stroke-width="1.500"/><circle cx="5" cy="14.700" r="3.700" fill="#fff" stroke="#1a1a1a" stroke-width="1.500"/><circle cx="5" cy="24.400" r="3.700" fill="#fff" stroke="#1a1a1a" stroke-width="1.500"/></svg>
<div class="a" style="left:414px;top:134px;width:2145px;height:993px;border:1px solid #a6a6a6;border-radius:7px 7px 0 0;background:#f0f0f0"></div>
<div class="a" style="left:415px;top:135px;width:2143px;height:39px;background:#f0f0f0;border-radius:7px 7px 0 0"></div>
<div class="a" style="left:415px;top:174px;width:2143px;height:1px;background:#a6a6a6;"></div>
<div class="a" style="left:588px;top:136px;width:1px;height:38px;background:#a6a6a6;"></div>
<div class="t" style="left:463px;top:138.5px;font-size:25px;color:#000;letter-spacing:-0.273px;-webkit-text-stroke:.4px #f0f0f0;">main.c</div>
<div class="a" style="left:914.5px;top:136px;width:1px;height:38px;background:#a6a6a6;"></div>
<div class="t" style="left:636.25px;top:138.5px;font-size:25px;color:#000;letter-spacing:0.079px;-webkit-text-stroke:.4px #f0f0f0;">gd32vw553h_eval.h</div>
<div class="a" style="left:1236.5px;top:136px;width:1px;height:38px;background:#a6a6a6;"></div>
<div class="t" style="left:962.5px;top:138.5px;font-size:25px;color:#000;letter-spacing:0.015px;-webkit-text-stroke:.4px #f0f0f0;">gd32vw553h_eval.c</div>
<div class="a" style="left:1423px;top:136px;width:1px;height:38px;background:#a6a6a6;"></div>
<div class="t" style="left:1284.5px;top:138.5px;font-size:25px;color:#000;letter-spacing:0.125px;-webkit-text-stroke:.4px #f0f0f0;">*main.c</div>
<div class="a" style="left:1423px;top:135px;width:334px;height:40px;background:#ffffff;"></div>
<div class="a" style="left:1423px;top:135px;width:334px;height:4.5px;background:#1f78d1;"></div>
<div class="a" style="left:1423px;top:139px;width:1px;height:36px;background:#a6a6a6;"></div>
<div class="a" style="left:1756px;top:139px;width:1px;height:36px;background:#a6a6a6;"></div>
<div class="t" style="left:1470.5px;top:138.5px;font-size:25px;color:#000;letter-spacing:0.114px;-webkit-text-stroke:.4px #fff;">*gd32vw553h_eval.h</div>
<svg style="left:1723px;top:147px" width="18" height="18" viewBox="0 0 18 18" stroke="#000" stroke-width="1.2" fill="none"><path d="M1 1L17 17M17 1L1 17"/></svg>
<svg style="left:428px;top:141.5px" width="23" height="28" viewBox="0 0 23 28" ><path d="M1 1h13l7 7v19H1z" fill="#fbfcff" stroke="#a68a4c" stroke-width="2"/><path d="M14 1v7h7z" fill="#ecd490"/><rect x="2" y="19" width="18" height="7" fill="#dbe6f6"/><rect x="3.500" y="20" width="2.600" height="2.600" fill="#1c4c88"/><text x="7.5" y="22.800" font-family="Liberation Sans,sans-serif" font-weight="bold" font-size="22" fill="#1c4c88">c</text></svg>
<svg style="left:602px;top:141.5px" width="23" height="28" viewBox="0 0 23 28" ><path d="M1 1h13l7 7v19H1z" fill="#fbfcff" stroke="#a68a4c" stroke-width="2"/><path d="M14 1v7h7z" fill="#ecd490"/><rect x="2" y="19" width="18" height="7" fill="#dbe6f6"/><rect x="3.500" y="20" width="2.600" height="2.600" fill="#1c4c88"/><text x="7.5" y="22.800" font-family="Liberation Sans,sans-serif" font-weight="bold" font-size="19" fill="#1c4c88">h</text></svg>
<svg style="left:928.75px;top:141.5px" width="23" height="28" viewBox="0 0 23 28" ><path d="M1 1h13l7 7v19H1z" fill="#fbfcff" stroke="#a68a4c" stroke-width="2"/><path d="M14 1v7h7z" fill="#ecd490"/><rect x="2" y="19" width="18" height="7" fill="#dbe6f6"/><rect x="3.500" y="20" width="2.600" height="2.600" fill="#1c4c88"/><text x="7.5" y="22.800" font-family="Liberation Sans,sans-serif" font-weight="bold" font-size="22" fill="#1c4c88">c</text></svg>
<svg style="left:1250px;top:141.5px" width="23" height="28" viewBox="0 0 23 28" ><path d="M1 1h13l7 7v19H1z" fill="#fbfcff" stroke="#a68a4c" stroke-width="2"/><path d="M14 1v7h7z" fill="#ecd490"/><rect x="2" y="19" width="18" height="7" fill="#dbe6f6"/><rect x="3.500" y="20" width="2.600" height="2.600" fill="#1c4c88"/><text x="7.5" y="22.800" font-family="Liberation Sans,sans-serif" font-weight="bold" font-size="22" fill="#1c4c88">c</text></svg>
<svg style="left:1436px;top:141.5px" width="23" height="28" viewBox="0 0 23 28" ><path d="M1 1h13l7 7v19H1z" fill="#fbfcff" stroke="#a68a4c" stroke-width="2"/><path d="M14 1v7h7z" fill="#ecd490"/><rect x="2" y="19" width="18" height="7" fill="#dbe6f6"/><rect x="3.500" y="20" width="2.600" height="2.600" fill="#1c4c88"/><text x="7.5" y="22.800" font-family="Liberation Sans,sans-serif" font-weight="bold" font-size="19" fill="#1c4c88">h</text></svg>
<div class="a" style="left:2483px;top:143px;width:19px;height:7px;border:1.500px solid #000"></div><div class="a" style="left:2522px;top:143px;width:19px;height:19px;border:1.500px solid #000;border-top-width:1.500px"></div><div class="a" style="left:2522px;top:147px;width:19px;height:1.500px;background:#000"></div>
<div class="a" style="left:415px;top:175px;width:2143px;height:951px;background:#ffffff;"></div>
<div class="a" style="left:420px;top:180px;width:2134px;height:942px;background:#f0f0f0;"></div>
<div class="a" style="left:420px;top:180px;width:24px;height:908px;background:#f0f0f0;"></div>
<div class="a" style="left:444px;top:180px;width:2051px;height:909px;background:#ffffff;"></div>
<div class="a" style="left:478px;top:180px;width:2px;height:908px;background:#f0f0f0;"></div>
<div class="a" style="left:444px;top:692px;width:16px;height:96px;background:#ecdcec;"></div>
<div class="a" style="left:420px;top:756px;width:24px;height:32px;background-color:#2a7fd8;background-image:linear-gradient(45deg,#bcd8f4 25%,transparent 25%,transparent 75%,#bcd8f4 75%),linear-gradient(45deg,#bcd8f4 25%,transparent 25%,transparent 75%,#bcd8f4 75%);background-size:4px 4px;background-position:0 0,2px 2px"></div>
<div class="a" style="left:484px;top:756px;width:2011px;height:32px;background:#e8f2fe;"></div>
<div class="a" style="left:2502px;top:594px;width:19px;height:189px;background:#858585;"></div>
<div class="a" style="left:2532px;top:702px;width:17px;height:13px;border:1px solid #d8b4d8;background:#f0e4f0"></div>
<svg style="left:0;top:0" width="1" height="1"><polygon points="500.9,1100 500.9,1111 492.1,1105.5" fill="#a0a0a0"/></svg>
<svg style="left:0;top:0" width="1" height="1"><polygon points="2472.1,1100 2472.1,1111 2480.9,1105.5" fill="#a0a0a0"/></svg>
<div class="a" style="left:0;top:0;width:2495px;height:1088px;overflow:hidden">
<div class="ln" style="top:180px">{</div>
<div class="ln" style="top:212px">    <span class="en">KEY_MODE_GPIO</span> = 0,</div>
<div class="ln" style="top:244px">    <span class="en">KEY_MODE_EXTI</span> = 1</div>
<div class="ln" style="top:276px">}<span class="ty">keymode_typedef_enum</span>;</div>
<div class="ln" style="top:340px"><span class="cm">/* </span><span class="cm sq">eval</span><span class="cm"> board low layer led */</span></div>
<div class="ln" style="top:372px"><span class="kw">#define</span> LEDn                             3U</div>
<div class="ln" style="top:436px"><span class="kw">#define</span> LED1_PIN                         GPIO_PIN_4</div>
<div class="ln" style="top:468px"><span class="kw">#define</span> LED1_GPIO_PORT                   GPIOA</div>
<div class="ln" style="top:500px"><span class="kw">#define</span> LED1_GPIO_CLK                    RCU_GPIOA</div>
<div class="ln" style="top:564px"><span class="kw">#define</span> LED2_PIN                         GPIO_PIN_5</div>
<div class="ln" style="top:596px"><span class="kw">#define</span> LED2_GPIO_PORT                   GPIOA</div>
<div class="ln" style="top:628px"><span class="kw">#define</span> LED2_GPIO_CLK                    RCU_GPIOA</div>
<div class="ln" style="top:692px"><span class="kw">#define</span> LED3_PIN                         GPIO_PIN_3</div>
<div class="ln" style="top:724px"><span class="kw">#define</span> LED3_GPIO_PORT                   GPIOB</div>
<div class="ln hl" style="top:756px"><span class="kw">#define</span> LED3_GPIO_CLK                    RCU_GPIOB</div>
<div class="ln" style="top:820px"><span class="kw">#define</span> COMn                             1U</div>
<div class="ln" style="top:852px"><span class="kw">#define</span> EVAL_COM0                        USART0</div>
<div class="ln" style="top:884px"><span class="kw">#define</span> EVAL_COM0_CLK                    RCU_USART0</div>
<div class="ln" style="top:948px"><span class="kw">#define</span> EVAL_COM0_TX_PIN                 GPIO_PIN_15</div>
<div class="ln" style="top:980px"><span class="kw">#define</span> EVAL_COM0_RX_PIN                 GPIO_PIN_8</div>
<div class="ln" style="top:1044px"><span class="kw">#define</span> EVAL_COM0_TX_GPIO_PORT           GPIOB</div>
<div class="ln" style="top:1076px"><span class="kw">#define</span> EVAL_COM0_TX_GPIO_CLK            RCU_GPIOB</div>
</div>
<div class="a" style="left:414px;top:1136px;width:2145px;height:315.5px;border:1px solid #a6a6a6;border-radius:7px 7px 0 0;background:#f0f0f0"></div>
<div class="a" style="left:415px;top:1176px;width:2143px;height:1px;background:#a6a6a6;"></div>
<div class="t" style="left:463px;top:1141px;font-size:25px;color:#000;letter-spacing:-0.641px;-webkit-text-stroke:.4px #f0f0f0;">Tasks</div>
<div class="a" style="left:535px;top:1138px;width:187px;height:4px;background:#6e6e6e;"></div>
<div class="a" style="left:533px;top:1139px;width:1px;height:37px;background:#a6a6a6;"></div>
<div class="a" style="left:722px;top:1139px;width:1px;height:37px;background:#a6a6a6;"></div>
<div class="a" style="left:534px;top:1176px;width:188px;height:1px;background:#f0f0f0;"></div>
<div class="t" style="left:580.6px;top:1141px;font-size:25px;color:#000;letter-spacing:-0.191px;-webkit-text-stroke:.4px #f0f0f0;">Console</div>
<svg style="left:689px;top:1149px" width="18" height="18" viewBox="0 0 18 18" stroke="#000" stroke-width="1.2" fill="none"><path d="M1 1L17 17M17 1L1 17"/></svg>
<svg style="left:422px;top:1142px" width="31" height="30" viewBox="0 0 31 30" ><rect x="6" y="4" width="24" height="25" rx="3" fill="#f8f8fc" stroke="#c89860" stroke-width="2.500"/><path d="M12 7l3-6h7l3 6z" fill="#8c9cc0"/><path d="M17 12h9M15 17h11M15 22h11" stroke="#6c80b8" stroke-width="2"/><path d="M1.500 14.500l6 6L17 9.500" fill="none" stroke="#1c74d0" stroke-width="3.500"/></svg>
<svg style="left:544px;top:1143.5px" width="27" height="27" viewBox="0 0 27 27" ><g transform="scale(1)"><rect x="1.500" y="1.500" width="23" height="18" rx="2.500" fill="#eaf6fe" stroke="#2c5ca8" stroke-width="3"/><rect x="3.500" y="3.500" width="19" height="14" fill="none" stroke="#8c98a8" stroke-width="1"/><path d="M6 8.500h9M6 13h13" stroke="#283c8c" stroke-width="2"/><rect x="9" y="21" width="8" height="3" fill="#2c5ca8"/><rect x="2" y="24" width="22" height="2.500" fill="#2c5ca8"/></g></svg>
<svg style="left:1927px;top:1143px" width="27" height="27" viewBox="0 0 27 27" ><path d="M5 5l17 17M22 5L5 22" stroke="#505050" stroke-width="9" stroke-linecap="round"/><path d="M5 5l17 17M22 5L5 22" stroke="#747474" stroke-width="6" stroke-linecap="round"/></svg>
<div class="a" style="left:1961px;top:1140px;width:1.3px;height:34px;background:#969696;"></div>
<svg style="left:1974px;top:1143px" width="25" height="28" viewBox="0 0 25 28" ><path d="M8 1.500h9v12h6.500L12.500 26.500 1.500 13.500H8z" fill="url(#gy)" stroke="#b87a14" stroke-width="2" stroke-linejoin="round"/></svg>
<svg style="left:2013px;top:1143px" width="25" height="28" viewBox="0 0 25 28" ><path d="M8 26.500h9v-12h6.500L12.500 1.500 1.500 14.500H8z" fill="url(#gy)" stroke="#b87a14" stroke-width="2" stroke-linejoin="round"/></svg>
<div class="a" style="left:2045px;top:1138px;width:39px;height:37px;background:#cce8ff;border:1.500px solid #99d1ff;border-radius:4px"></div>
<svg style="left:2049px;top:1141px" width="32.01" height="32.01" viewBox="0 0 32.01 32.01" ><g transform="scale(0.97)"><path d="M1.500 9L12 1v5h11.500q2 0 2 2v2q0 2-2 2H12v5z" fill="url(#gy)" stroke="#b87a14" stroke-width="2" stroke-linejoin="round"/><path d="M31.500 23L21 15v5H9.500q-2 0-2 2v2q0 2 2 2H21v5z" fill="url(#gy)" stroke="#b87a14" stroke-width="2" stroke-linejoin="round"/></g></svg>
<div class="a" style="left:2086.5px;top:1140px;width:1.3px;height:34px;background:#969696;"></div>
<svg style="left:2097px;top:1143px" width="31" height="30" viewBox="0 0 31 30" ><rect x="3" y="1" width="22" height="24" fill="url(#gw)" stroke="#a89c70" stroke-width="2"/><rect x="18" y="1" width="11" height="26" fill="#5c78b0"/><rect x="20.500" y="9" width="6" height="9" fill="#dce8f8"/><rect x="21" y="3" width="5" height="4" fill="#eaf2fc"/><rect x="21" y="21" width="5" height="4" fill="#eaf2fc"/><rect x="22.500" y="4" width="2" height="2" fill="#1c3c8c"/><rect x="22.500" y="22" width="2" height="2" fill="#1c3c8c"/><rect x="0" y="14" width="17" height="15" fill="#b4c0dc" stroke="#a0acd0" stroke-width="1"/><rect x="4" y="15" width="9" height="5" fill="#e8ecf4"/><rect x="5" y="23" width="7" height="6" fill="#d0d8ec"/></svg>
<svg style="left:2136px;top:1143px" width="31" height="30" viewBox="0 0 31 30" ><rect x="3" y="1" width="22" height="24" fill="url(#gw)" stroke="#a89c70" stroke-width="2"/><rect x="18" y="1" width="11" height="26" fill="#5c78b0"/><rect x="20.500" y="9" width="6" height="9" fill="#dce8f8"/><rect x="21" y="3" width="5" height="4" fill="#eaf2fc"/><rect x="21" y="21" width="5" height="4" fill="#eaf2fc"/><rect x="22.500" y="4" width="2" height="2" fill="#1c3c8c"/><rect x="22.500" y="22" width="2" height="2" fill="#1c3c8c"/><path d="M4 16v-2a4.500 4.500 0 0 1 9 0v2" fill="none" stroke="#c89820" stroke-width="2.500"/><rect x="1" y="16" width="15" height="12" rx="1.500" fill="#f4d880" stroke="#b88410" stroke-width="2"/><rect x="7" y="20" width="3" height="4" fill="#6c4c0c"/></svg>
<svg style="left:2179px;top:1147px" width="23" height="14" viewBox="0 0 23 14" ><path d="M0 1h22M0 9h22" stroke="#a8b4e0" stroke-width="2"/><path d="M0 5h8M0 13h8" stroke="#c4cce8" stroke-width="2"/></svg>
<svg style="left:2214px;top:1141px" width="32" height="31" viewBox="0 0 32 31" ><path d="M1 1h13l7 7v19H1z" fill="#f6f6fc" stroke="#b8a878" stroke-width="2"/><path d="M14 1v7h7z" fill="#e8d490"/><path d="M4.500 7h7M4.500 11h10M4.500 15h13M4.500 19h10M4.500 23h8" stroke="#5c78b4" stroke-width="2"/><path d="M19 19l9 9M28 19l-9 9" stroke="#3c3c3c" stroke-width="5" stroke-linecap="round"/><path d="M19 19l9 9M28 19l-9 9" stroke="#6c6c6c" stroke-width="2.500" stroke-linecap="round"/></svg>
<div class="a" style="left:2248px;top:1138px;width:39px;height:37px;background:#cce8ff;border:1.500px solid #99d1ff;border-radius:4px"></div>
<svg style="left:2253px;top:1143px" width="32" height="29" viewBox="0 0 32 29" ><rect x="2" y="12" width="13" height="11" fill="#e8f0fc" stroke="#5c80c0" stroke-width="2"/><rect x="6" y="23" width="5" height="3" fill="#5c80c0"/><rect x="3" y="26" width="11" height="2" fill="#5c80c0"/><path d="M10 22L30 4v16z" fill="#a8b4c8" opacity=".5"/><rect x="8" y="1" width="22" height="16" fill="#eef6fe" stroke="#4c80c8" stroke-width="2"/><path d="M12 6.500h10M12 11h14" stroke="#44549c" stroke-width="2"/></svg>
<div class="a" style="left:2289px;top:1140px;width:1.3px;height:34px;background:#969696;"></div>
<svg style="left:2302px;top:1143px" width="30" height="29" viewBox="0 0 30 29" ><rect x="1" y="9" width="24" height="18" fill="url(#gw)" stroke="#98a0b0" stroke-width="2"/><rect x="1" y="9" width="24" height="4.500" fill="url(#gt)"/><path d="M17 14l-5 6" stroke="#223" stroke-width="2.500"/><ellipse cx="21" cy="9.500" rx="4.500" ry="3.500" transform="rotate(-38 21 9.500)" fill="#2c9434"/><ellipse cx="21.500" cy="7" rx="8.500" ry="5.500" transform="rotate(-38 21.500 7)" fill="#48b440" stroke="#1c8424" stroke-width="1.500"/></svg>
<svg style="left:2342px;top:1143px" width="27" height="27" viewBox="0 0 27 27" ><g transform="scale(1)"><rect x="1.500" y="1.500" width="23" height="18" rx="2.500" fill="#eaf6fe" stroke="#2c5ca8" stroke-width="3"/><rect x="3.500" y="3.500" width="19" height="14" fill="none" stroke="#8c98a8" stroke-width="1"/><path d="M6 8.500h9M6 13h13" stroke="#283c8c" stroke-width="2"/><rect x="9" y="21" width="8" height="3" fill="#2c5ca8"/><rect x="2" y="24" width="22" height="2.500" fill="#2c5ca8"/></g></svg>
<svg style="left:2381px;top:1153.5px" width="14" height="8.5" viewBox="0 0 14 8.5" ><path d="M0 0h14L7 8.500z" fill="#1f1f1f"/></svg>
<svg style="left:2410px;top:1141px" width="32" height="31" viewBox="0 0 32 31" ><rect x="1" y="6" width="26" height="23" fill="url(#gw)" stroke="#9a8a5a" stroke-width="2"/><rect x="1" y="6" width="20" height="5" fill="url(#gt)"/><path d="M7 29q14 0 17-14" stroke="#f7dc8c" stroke-width="2.500" fill="none"/><path d="M23 1l7 8-7 8-7-8z" fill="#fff6d8" stroke="#b8860b" stroke-width="2"/><path d="M23 4.500v9M18.500 9h9" stroke="#fff" stroke-width="2.500"/></svg>
<svg style="left:2451px;top:1153.5px" width="14" height="8.5" viewBox="0 0 14 8.5" ><path d="M0 0h14L7 8.500z" fill="#1f1f1f"/></svg>
<div class="a" style="left:2483px;top:1146px;width:19px;height:7px;border:1.500px solid #000"></div><div class="a" style="left:2522px;top:1146px;width:19px;height:19px;border:1.500px solid #000;border-top-width:1.500px"></div><div class="a" style="left:2522px;top:1150px;width:19px;height:1.500px;background:#000"></div>
<div class="t" style="left:420.7px;top:1180.5px;font-size:25px;color:#000;letter-spacing:-0.086px;-webkit-text-stroke:.4px #f0f0f0;">CDT Build Console [GD_test02]</div>
<div class="a" style="left:420px;top:1214px;width:2134px;height:1px;background:#a6a6a6;"></div>
<div class="a" style="left:420px;top:1215px;width:2101px;height:198px;background:#ffffff;"></div>
<svg style="left:0;top:0" width="1" height="1"><polygon points="2532,1239.4 2543,1239.4 2537.5,1230.6" fill="#a0a0a0"/></svg>
<svg style="left:0;top:0" width="1" height="1"><polygon points="2532,1390.6 2543,1390.6 2537.5,1399.4" fill="#a0a0a0"/></svg>
<svg style="left:0;top:0" width="1" height="1"><polygon points="440.4,1423.5 440.4,1434.5 431.6,1429" fill="#a0a0a0"/></svg>
<svg style="left:0;top:0" width="1" height="1"><polygon points="2497.6,1424 2497.6,1435 2506.4,1429.5" fill="#a0a0a0"/></svg>
<div class="a" style="left:1220px;top:1453px;width:1px;height:43px;background:#a6a6a6;"></div>
<div class="a" style="left:1486.5px;top:1453px;width:1px;height:43px;background:#a6a6a6;"></div>
<div class="a" style="left:1740.5px;top:1453px;width:1px;height:43px;background:#a6a6a6;"></div>
<div class="t" style="left:1233.7px;top:1457px;font-size:25px;color:#000;letter-spacing:0.544px;-webkit-text-stroke:.4px #f0f0f0;">Writable</div>
<div class="t" style="left:1500.7px;top:1457px;font-size:25px;color:#000;letter-spacing:0.129px;-webkit-text-stroke:.4px #f0f0f0;">Smart Insert</div>
<div class="t" style="left:1754.8px;top:1457px;font-size:25px;color:#000;letter-spacing:-0.243px;-webkit-text-stroke:.4px #f0f0f0;">76 : 51 : 2691</div>
<div class="a" style="left:1990px;top:1466px;width:4px;height:29px;background:repeating-linear-gradient(#b4aca0 0 3.500px,transparent 3.500px 7px)"></div>
<div class="a" style="left:0;top:1504px;width:2560px;height:96px;background:linear-gradient(90deg,#232323 0%,#222122 60%,#1e1d26 100%)"></div>
<div class="a" style="left:0px;top:1503.5px;width:2560px;height:2px;background:#454545;"></div>
<div class="a" style="left:42px;top:1530px;width:40px;height:40px;border-radius:50%;background:linear-gradient(150deg,#ffd000 10%,#f89a08 50%,#e85a10 95%)"></div>
<div class="a" style="left:60.500px;top:1516px;width:31.500px;height:31.500px;border-radius:50%;background:#c42b1c;color:#fff;font-size:22px;line-height:32px;text-align:center">4</div>
<div class="t" style="left:101.5px;top:1519.2px;font-size:23px;color:#ffffff;letter-spacing:-0.548px;">29°C</div>
<div class="t" style="left:101.5px;top:1551.5px;font-size:23px;color:#d2d2d2;letter-spacing:-0.250px;">晴朗</div>
<svg style="left:680px;top:1530px" width="46" height="46" viewBox="0 0 47 47"><defs><linearGradient id="gwn" x1="0" y1="0" x2="1" y2="1"><stop offset="0" stop-color="#84dcff"/><stop offset=".45" stop-color="#3cc0fc"/><stop offset="1" stop-color="#0c98f8"/></linearGradient></defs><path d="M0 2q0-2 2-2h20.500v22.500H0zM24.500 0H45q2 0 2 2v20.500H24.500zM0 24.500h22.500V47H2q-2 0-2-2zM24.500 24.500H47V45q0 2-2 2H24.500z" fill="url(#gwn)"/></svg>
<div class="a" style="left:754.500px;top:1522px;width:437px;height:60px;border-radius:30px;background:#f3f3f3"></div>
<svg style="left:775.500px;top:1537px" width="32" height="32" viewBox="0 0 32 32" fill="none" stroke="#2a2a2a" stroke-width="3.200"><circle cx="12.500" cy="12.500" r="9.500"/><path d="M19.500 19.500l9 9" stroke-linecap="round"/></svg>
<div class="t" style="left:828px;top:1536px;font-size:27px;color:#5e5e5e;letter-spacing:0.800px;">搜索</div>
<svg style="left:1098px;top:1528px" width="76" height="50" viewBox="0 0 76 50"><defs><radialGradient id="ggl" cx=".4" cy=".35" r=".75"><stop offset="0" stop-color="#6cb8f4"/><stop offset="1" stop-color="#2474cc"/></radialGradient><linearGradient id="gfa" x1="0" y1="0" x2="0" y2="1"><stop offset="0" stop-color="#d0ccd8"/><stop offset="1" stop-color="#84808c"/></linearGradient></defs>
<rect x="5" y="3" width="20" height="4.500" rx="2" fill="#8c8890"/><rect x="13" y="1" width="4" height="16" fill="#a8a4b0"/><path d="M1 32v-8q0-8 9-8h18v9H12q-3 0-3 3v4z" fill="url(#gfa)"/><path d="M5 38q4 6 0 10-5-3 0-10z" fill="#8cc4f8"/>
<circle cx="50" cy="24" r="22.500" fill="url(#ggl)"/><path d="M38 8q8-6 16-4l-2 4 6 1-3 5-7-1-3 5 7 2 6 6-4 7-3 7-5-8v-7l-6-5q-4-6-2-12zM62 10l7 4 3 8-5 2-4-6zM60 30l5 1-2 6z" fill="#8cd458"/></svg>
<div class="a" style="left:1217px;top:1542px;width:36px;height:31px;border-radius:3px;background:linear-gradient(#6a6a6a,#4c4c4c)"></div>
<div class="a" style="left:1229px;top:1530px;width:36px;height:31.500px;border-radius:3px;background:linear-gradient(160deg,#ffffff 30%,#d4d4d4);opacity:.96"></div>
<svg style="left:1304px;top:1527px" width="50" height="50" viewBox="0 0 50 50"><defs><linearGradient id="ge1" x1="0" y1="0" x2="1" y2="0"><stop offset="0" stop-color="#1c9ce8"/><stop offset=".55" stop-color="#34c4d0"/><stop offset="1" stop-color="#58d468"/></linearGradient><linearGradient id="ge2" x1="0" y1="0" x2="0" y2="1"><stop offset="0" stop-color="#1484dc"/><stop offset="1" stop-color="#0c4c9c"/></linearGradient><clipPath id="gec"><circle cx="25" cy="25" r="24"/></clipPath></defs>
<g clip-path="url(#gec)"><circle cx="25" cy="25" r="24" fill="url(#ge2)"/><path d="M0 24Q3 1 25 1q19 0 24 18 1 9-7 12-8 2-12-2 4-4 1-9-4-6-12-4-12 3-19 8z" fill="url(#ge1)"/><path d="M12 34q-3-12 8-16 6-2 10 2-7 1-8 8-1 8 7 12 8 3 16-3-5 12-19 13-11-2-14-16z" fill="#0c54a4"/><path d="M22.500 27q1-6 8-7 4 5 0 9 5 4 13 1l8-4v12l-8-2q-8 6-16 2-6-4-5-11z" fill="#222222"/></g></svg>
<div class="a" style="left:1323px;top:1584.5px;width:12px;height:5.5px;background:#9c9c9c;border-radius:3px"></div>
<svg style="left:1392px;top:1531px" width="50" height="44" viewBox="0 0 50 44"><defs><linearGradient id="gx1" x1="0" y1="0" x2="1" y2="1"><stop offset="0" stop-color="#ffd868"/><stop offset="1" stop-color="#f8b81c"/></linearGradient><linearGradient id="gx2" x1="0" y1="0" x2="0" y2="1"><stop offset="0" stop-color="#1c8cdc"/><stop offset="1" stop-color="#0c68c0"/></linearGradient></defs>
<path d="M1 4q0-3 3-3h12q2 0 4 4h26q3 0 3 3v6H1z" fill="#e8a818"/><rect x="1" y="7" width="48" height="36" rx="2.500" fill="url(#gx1)"/><path d="M9 43V35q0-6 6-6h20q6 0 6 6v8z" fill="url(#gx2)"/><rect x="16" y="34" width="18" height="2.500" rx="1" fill="#0c4c98"/></svg>
<div class="a" style="left:1411px;top:1584.5px;width:12px;height:5.5px;background:#9c9c9c;border-radius:3px"></div>
<svg style="left:1482px;top:1532px" width="50" height="46" viewBox="0 0 50 46"><path d="M20 32H4V4h36v14" fill="none" stroke="#1cc860" stroke-width="5" stroke-linejoin="round"/><path d="M4 2h36q2.500 0 2.500 2.500V8H1.500V4.500Q1.500 2 4 2z" fill="#1cc860"/><ellipse cx="35" cy="29" rx="12.500" ry="10.500" fill="#d0d0d0"/><path d="M40 36l5 6-9-3z" fill="#d0d0d0"/><circle cx="31" cy="26" r="1.700" fill="#9c9c9c"/><circle cx="39" cy="26" r="1.700" fill="#9c9c9c"/></svg>
<div class="a" style="left:1499px;top:1584.5px;width:12px;height:5.5px;background:#9c9c9c;border-radius:3px"></div>
<svg style="left:1569px;top:1528px" width="48" height="48" viewBox="0 0 48 48"><defs><linearGradient id="gpp" x1="0" y1="0" x2="1" y2="1"><stop offset="0" stop-color="#9058fc"/><stop offset="1" stop-color="#6438dc"/></linearGradient></defs><rect width="48" height="48" rx="9" fill="url(#gpp)"/><path d="M0 18L30 48H9q-9 0-9-9z" fill="#6c40e4" opacity=".7"/><path d="M9 8l20 12 9 20-16-6z" fill="#fff"/><path d="M25 26l4-1 4 8-2 1z" fill="#7c48ec"/></svg>
<div class="a" style="left:1587px;top:1584.5px;width:12px;height:5.5px;background:#9c9c9c;border-radius:3px"></div>
<div class="a" style="left:1641px;top:1512px;width:80px;height:80px;border-radius:8px;background:#322f35;border:1.500px solid #3e3b41"></div>
<div class="a" style="left:1657px;top:1528px;width:48px;height:48px;background:#0067c0;"></div>
<div class="a" style="left:1657px;top:1528px;width:48px;height:48px;color:#fff;font-weight:bold;font-size:17px;line-height:49px;text-align:center;letter-spacing:-.3px">GD32</div>
<div class="a" style="left:1665px;top:1584.5px;width:32px;height:5.5px;background:#4cc2ff;border-radius:3px"></div>
<svg style="left:1745px;top:1528px" width="48" height="48" viewBox="0 0 48 48"><path d="M22 2L47 14 30 44 1 28z" fill="#4c4c50"/><path d="M22 2L47 14 44 19 19 7z" fill="#6c6c70"/><circle cx="27" cy="5" r="2.200" fill="#0c0c0c"/><path d="M14 12l22 10M12 17l20 9" stroke="#c8b078" stroke-width="2" opacity=".8"/><path d="M2 42L26 14" stroke="#c4c4c8" stroke-width="6.500" stroke-linecap="round"/><path d="M2 28q-3-8 6-10l2 5 5-1 1-5q7 4 2 11z" fill="#b4b4b8"/><path d="M4 40l-3 5 4 3 6-3z" fill="#a4a4a8"/><path d="M17 34l10 11 4-4-10-11z" fill="#f0b020"/></svg>
<div class="a" style="left:1763px;top:1584.5px;width:12px;height:5.5px;background:#9c9c9c;border-radius:3px"></div>
<svg style="left:1834px;top:1529px" width="46" height="48" viewBox="0 0 46 48"><defs><linearGradient id="gpa" x1="0" y1="0" x2="1" y2="1"><stop offset="0" stop-color="#38c0f4"/><stop offset="1" stop-color="#0c74d0"/></linearGradient></defs><path d="M24 1q18 2 20 18 0 20-19 25-8 1-7-6 2-6-4-5-12 4-13-8Q3 4 24 1z" fill="url(#gpa)"/><circle cx="12.500" cy="12" r="4.200" fill="#2c9c2c"/><circle cx="23.500" cy="8" r="4.200" fill="#f8b414"/><circle cx="7.500" cy="23" r="4.200" fill="#dc4814"/><circle cx="24.500" cy="25" r="3" fill="#202020"/><path d="M30 13h10l-2 8h-6z" fill="#f4dca8"/><path d="M33 21h4l-.5 26h-3z" fill="#b46c14"/><rect x="32" y="20" width="6" height="3" fill="#d8d8d8"/></svg>
<div class="a" style="left:1851px;top:1584.5px;width:12px;height:5.5px;background:#9c9c9c;border-radius:3px"></div>
<svg style="left:2063px;top:1545px" width="24" height="14" viewBox="0 0 24 14" fill="none" stroke="#fff" stroke-width="2.600" stroke-linecap="round" stroke-linejoin="round"><path d="M2 12L11.500 2.500 21 12"/></svg>
<svg style="left:2122px;top:1535px" width="34" height="34" viewBox="0 0 34 34" fill="none" stroke="#fff" stroke-width="2.200"><path d="M2.500 17A13 13 0 0 1 27 9.500M29 1.500V10h-8.500"/><path d="M29 19A13 13 0 0 1 5 25M3 33v-8.500h8.500"/><circle cx="24.500" cy="25" r="8" fill="#f89c0c" stroke="none"/></svg>
<div class="t" style="left:2187px;top:1536px;font-size:30px;color:#ffffff;">英</div>
<svg style="left:2250px;top:1539px" width="34" height="25" viewBox="0 0 34 25" fill="none" stroke="#fff" stroke-width="2.400" stroke-linecap="round"><path d="M1.500 9Q17-5 32.500 9"/><path d="M6.500 14Q17 4 27.500 14"/><path d="M11.500 18.500Q17 13.500 22.500 18.500"/><circle cx="17" cy="22" r="2.200" fill="#fff" stroke="none"/></svg>
<svg style="left:2298px;top:1537px" width="36" height="30" viewBox="0 0 36 30" fill="none" stroke="#fff" stroke-width="2.200" stroke-linejoin="round"><path d="M2 10h5l7-7v24l-7-7H2z"/><path d="M18.500 10q4 5 0 10" stroke-linecap="round"/><path d="M23 6q7 9 0 18" stroke="#8c8c8c" stroke-linecap="round"/><path d="M27.500 2q10 13 0 26" stroke="#6c6c6c" stroke-linecap="round"/></svg>
<svg style="left:2346px;top:1541px" width="35" height="22" viewBox="0 0 35 22" fill="none" stroke="#fff" stroke-width="2.400"><rect x="1.500" y="1.500" width="27" height="19" rx="4.500"/><rect x="5" y="5.500" width="11" height="11" rx="1.500" fill="#fff" stroke="none"/><path d="M30.500 7.500q3 0 3 3.500t-3 3.500z" fill="#fff" stroke="none"/></svg>
<div class="t" style="left:2464.4px;top:1519.4px;font-size:23px;color:#ffffff;letter-spacing:-0.132px;">14:12</div>
<div class="t" style="left:2411.7px;top:1551px;font-size:23px;color:#ffffff;letter-spacing:0.808px;">2025/3/22</div>
</body></html>
